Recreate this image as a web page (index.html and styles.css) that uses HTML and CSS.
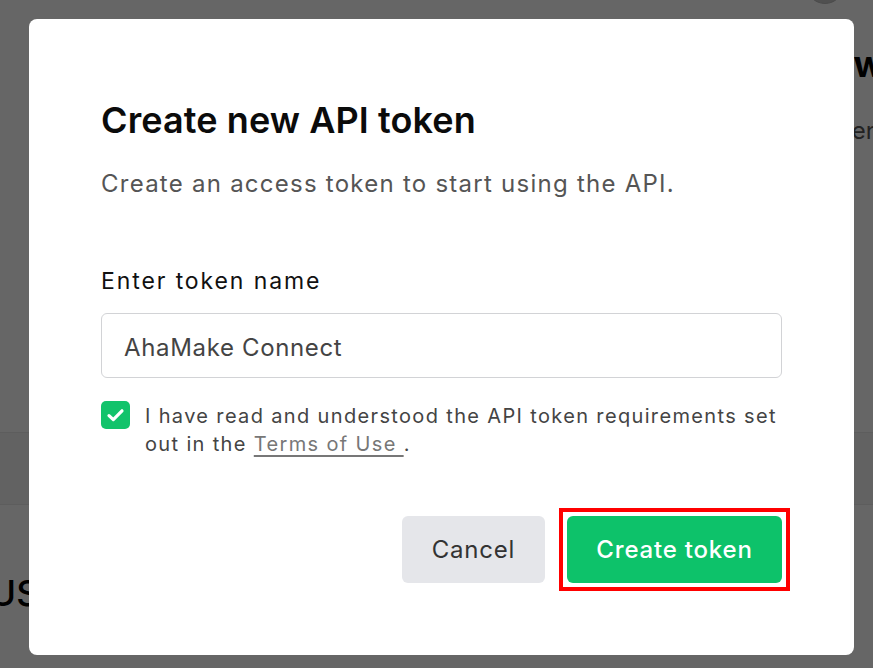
FILE: index.html
```html
<!DOCTYPE html>
<html>
<head>
<meta charset="utf-8">
<link rel="stylesheet" href="styles.css">
</head>
<body>
<div class="page">
  <div class="avatar"></div>
  <div class="page-head">
    <h2 class="page-title">New</h2>
    <p class="page-sub">Tokens</p>
  </div>
  <div class="band"></div>
  <div class="page-bottom">STATUS</div>
</div>
<div class="overlay"></div>
<div class="dialog">
  <h1 class="title">Create new API token</h1>
  <p class="subtitle">Create an access token to start using the API.</p>
  <label class="label">Enter token name</label>
  <div class="input">AhaMake Connect</div>
  <div class="check-row">
    <span class="checkbox">
      <svg width="29" height="28" viewBox="0 0 29 28"><path d="M8 14.6 L12.3 18.6 L21 9.8" fill="none" stroke="#fff" stroke-width="3.2" stroke-linecap="round" stroke-linejoin="round"/></svg>
    </span>
    <span class="check-text">I have read and understood the API token requirements set out in the <a class="terms">Terms of Use </a>.</span>
  </div>
  <div class="actions">
    <button class="btn cancel">Cancel</button>
    <span class="highlight"><button class="btn create">Create token</button></span>
  </div>
</div>
</body>
</html>
```
FILE: styles.css
```css
html, body {
  margin: 0;
  padding: 0;
}
body {
  width: 873px;
  height: 668px;
  overflow: hidden;
  position: relative;
  font-family: Inter, "Noto Sans", sans-serif;
  background: #fff;
}
.page {
  height: 668px;
  display: flex;
  flex-direction: column;
  position: relative;
}
.avatar {
  position: absolute;
  left: 806px;
  top: -34px;
  width: 36px;
  height: 36px;
  border-radius: 50%;
  background: #c8c8c8;
  border: 1px solid #bbb;
}
.page-head {
  padding-left: 805px;
  padding-top: 42px;
  white-space: nowrap;
}
.page-title {
  margin: 0;
  font-size: 36px;
  font-weight: 700;
  color: #000;
  line-height: 44px;
}
.page-sub {
  margin: 30px 0 0 6px;
  font-size: 24px;
  color: #555;
  line-height: 30px;
}
.band {
  margin-top: 286px;
  height: 71px;
  background: #f4f5f5;
  border-top: 1px solid #e8e8e8;
  border-bottom: 1px solid #e8e8e8;
}
.page-bottom {
  margin-top: 66px;
  margin-left: -100px;
  font-size: 36px;
  font-weight: 500;
  color: #000;
  line-height: 44px;
}
.overlay {
  position: absolute;
  inset: 0;
  background: rgba(0, 0, 0, 0.6);
}
.dialog {
  position: absolute;
  left: 29px;
  top: 19px;
  width: 825px;
  height: 636px;
  box-sizing: border-box;
  background: #fff;
  border-radius: 8px;
  padding: 79px 72px 0 72px;
  display: flex;
  flex-direction: column;
}
.title {
  margin: 0;
  font-size: 36px;
  font-weight: 600;
  line-height: 44px;
  color: #0b0b0b;
  letter-spacing: 0.1px;
}
.subtitle {
  margin: 26px 0 0 0;
  font-size: 24px;
  line-height: 32px;
  color: #555;
  letter-spacing: 1.25px;
}
.label {
  margin-top: 66px;
  font-size: 23px;
  line-height: 30px;
  font-weight: 400;
  color: #111;
  letter-spacing: 1.9px;
}
.input {
  margin-top: 17px;
  height: 65px;
  box-sizing: border-box;
  border: 1px solid #d2d3d6;
  border-radius: 6px;
  padding: 4px 22px 0 22px;
  display: flex;
  align-items: center;
  font-size: 24px;
  color: #444;
  letter-spacing: 0.65px;
}
.check-row {
  margin-top: 23px;
  display: flex;
  align-items: flex-start;
  gap: 15px;
}
.checkbox {
  flex: none;
  width: 29px;
  height: 28px;
  border-radius: 5px;
  background: #12c36b;
  display: flex;
}
.check-text {
  margin-top: 1px;
  font-size: 20px;
  line-height: 28px;
  color: #444;
  letter-spacing: 1.35px;
}
.terms {
  color: #777;
  text-decoration: underline;
  text-decoration-thickness: 2px;
  text-underline-offset: 4px;
}
.actions {
  margin-top: 50px;
  display: flex;
  justify-content: flex-end;
  align-items: center;
  gap: 14px;
}
.btn {
  font-family: inherit;
  font-size: 24px;
  letter-spacing: 0.8px;
  height: 67px;
  border: none;
  border-radius: 6px;
  padding: 0;
}
.cancel {
  width: 143px;
  background: #e5e6ea;
  color: #333;
}
.highlight {
  display: block;
  padding: 4px;
  border: 4px solid #f00;
  margin-right: -8px;
}
.create {
  display: block;
  width: 215px;
  background: #0dc26a;
  color: #fff;
  font-weight: 500;
}
```
